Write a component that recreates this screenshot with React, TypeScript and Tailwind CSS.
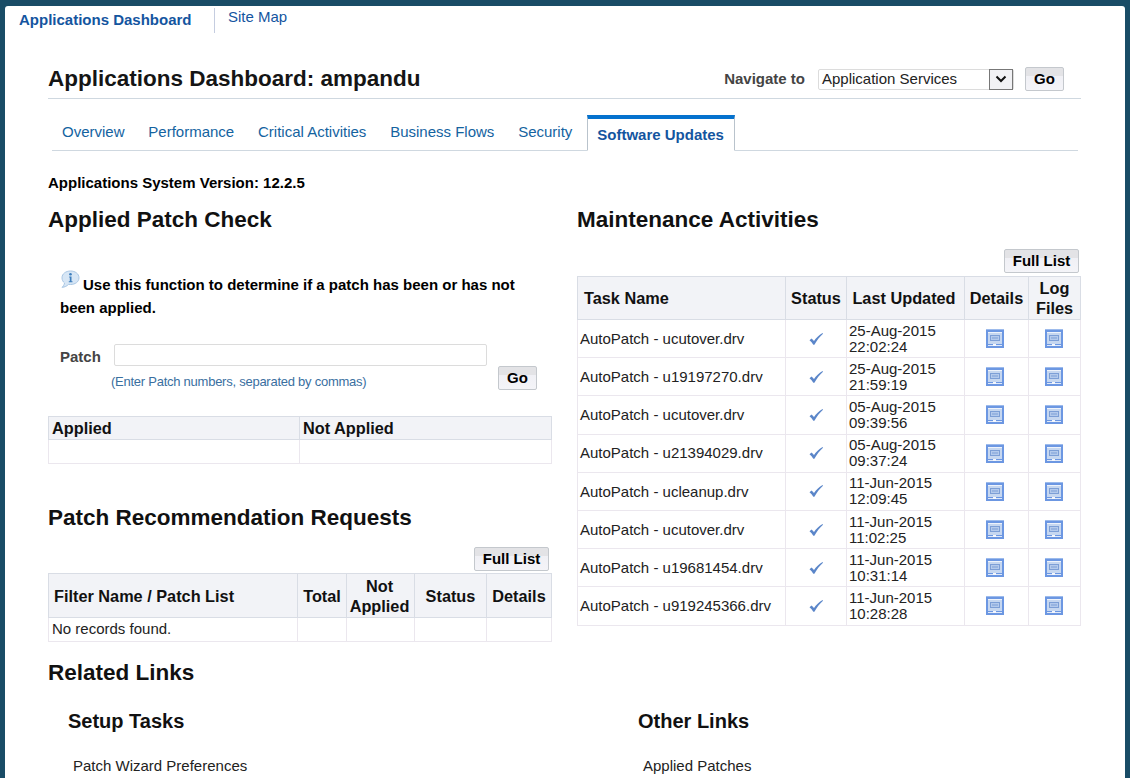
import React from "react";

const tabs = ["Overview", "Performance", "Critical Activities", "Business Flows", "Security"];
const rows = [
  ["AutoPatch - ucutover.drv", "25-Aug-2015", "22:02:24"],
  ["AutoPatch - u19197270.drv", "25-Aug-2015", "21:59:19"],
  ["AutoPatch - ucutover.drv", "05-Aug-2015", "09:39:56"],
  ["AutoPatch - u21394029.drv", "05-Aug-2015", "09:37:24"],
  ["AutoPatch - ucleanup.drv", "11-Jun-2015", "12:09:45"],
  ["AutoPatch - ucutover.drv", "11-Jun-2015", "11:02:25"],
  ["AutoPatch - u19681454.drv", "11-Jun-2015", "10:31:14"],
  ["AutoPatch - u919245366.drv", "11-Jun-2015", "10:28:28"],
];

function Check() {
  return (
    <svg width="16" height="14" viewBox="0 0 16 14" className="ml-[22px] block">
      <path d="M1.5 8.2 L3.6 6.6 L6 9 C8 6 10.800 3.200 14.500 1 L15 1.800 C11.500 5 8.800 8.500 6.400 12.800 L5.300 12.800 C4.300 11 3 9.500 1.500 8.200 Z" fill="#5b86c9" />
    </svg>
  );
}

function DocIcon({ className }: { className: string }) {
  return (
    <svg width="18" height="19" viewBox="0 0 18 19" className={`block ${className}`}>
      <rect x="0" y="0" width="18" height="19" fill="#6c97e2" />
      <rect x="0" y="0" width="18" height="1" fill="#9dbbec" />
      <rect x="2" y="3" width="14" height="12" fill="#c6d7f0" />
      <rect x="2" y="3" width="14" height="1" fill="#eef3fb" />
      <rect x="4.500" y="6.500" width="9" height="5" fill="#b4caec" stroke="#7d9fd6" strokeWidth="1" />
      <path d="M6 9h6" stroke="#7d9fd6" strokeWidth="1" />
      <rect x="2" y="16" width="14" height="1" fill="#e0e9f8" />
      <rect x="7" y="15" width="3" height="2" fill="#f4f7fd" />
    </svg>
  );
}

function InfoIcon() {
  return (
    <svg width="19" height="20" viewBox="0 0 19 20" className="block">
      <path d="M9.500 1 C14.200 1 18 3.800 18 7.800 C18 11.800 14.200 14.500 9.500 14.500 L7.500 14.400 C6 16 3.800 17.200 1 17.300 C2.500 16 3.400 14.600 3.500 13 C2 11.800 1 10 1 7.800 C1 3.800 4.800 1 9.500 1 Z" fill="#d7e6f5" stroke="#a8c6e4" />
      <circle cx="9.500" cy="4.300" r="1.300" fill="#3f7fbd" />
      <path d="M8.200 6.500h2.300v4.800h1v1H7.800v-1h1V7.500h-.6z" fill="#3f7fbd" />
    </svg>
  );
}

function Btn({ children, className }: { children: React.ReactNode; className: string }) {
  return (
    <div className={`flex items-center justify-center rounded-[2px] border border-[#c4c8cd] bg-[linear-gradient(#e3e3e6_0,#e3e3e6_35%,#f0f0f5_35%,#f4f4f8_100%)] text-[15px] font-bold text-black ${className}`}>
      {children}
    </div>
  );
}

const th = "border border-[#d9dde5] bg-[#f2f3f7] font-bold text-[#111] text-[16.300px] leading-[20px] p-0";
const td = "border border-[#ebe7ee] p-0 text-[15px] text-[#222]";
const h2 = "text-[22.500px] leading-[26px] font-bold text-[#111]";

export default function App() {
  return (
    <div className="h-[778px] overflow-hidden bg-[#194c66] px-[5px] pt-[6px] font-['Liberation_Sans',Arial,sans-serif]">
      <div className="h-[772px] overflow-hidden rounded-t-[3px] bg-white">
        <div className="flex h-[29px] items-start pl-[14px] pt-[2px]">
          <div className="w-[195px] pt-[3px] text-[15px] font-bold leading-[18px] text-[#14559f]">Applications Dashboard</div>
          <div className="h-[25px] w-px bg-[#c5cde0]" />
          <div className="pl-[13px] pt-[1px] text-[15px] leading-[16px] text-[#14559f]">Site Map</div>
        </div>

        <div className="ml-[43px] w-[1033px]">
          <div className="mt-[30px] flex h-[34px] items-center justify-between border-b border-[#cfd8e0] pb-[5px] pr-[17px]">
            <h1 className="text-[22.500px] font-bold leading-[26px] text-[#151515]">Applications Dashboard: ampandu</h1>
            <div className="flex items-center">
              <span className="mr-[13px] text-[15px] font-bold text-[#444]">Navigate to</span>
              <div className="flex h-[21px] w-[196px] items-center justify-between rounded-[2px] border border-[#dcdcdc] pl-[3px] text-[15px] text-[#222]">
                <span>Application Services</span>
                <div className="flex h-[21px] w-[24px] items-center justify-center border border-[#777] bg-[#f1f1f4]">
                  <svg width="12" height="8" viewBox="0 0 12 8"><path d="M1.500 1.500 L6 6 L10.500 1.500" fill="none" stroke="#111" strokeWidth="2" /></svg>
                </div>
              </div>
              <Btn className="ml-[11px] h-[24px] w-[39px]">Go</Btn>
            </div>
          </div>

          <div className="ml-[4px] mt-[16px] flex h-[36px] w-[1026px] items-end border-b border-[#cfd8e0]">
            <div className="flex h-[35px] items-start pl-[10px] pt-[7px] text-[15px] leading-[20px] text-[#14639f]">
              {tabs.map((t) => (
                <span key={t} className="mr-[23.800px]">{t}</span>
              ))}
            </div>
            <div className="-mb-px ml-[-9.500px] flex h-[36px] w-[148px] items-center justify-center border-x border-b border-t-[4px] border-x-[#b9c3cc] border-b-white border-t-[#0572ce] bg-white pt-[1px] text-[15px] font-bold text-[#14559f]">
              Software Updates
            </div>
          </div>

          <div className="mt-[23px] h-[18px] text-[15px] font-bold leading-[18px] text-black">Applications System Version: 12.2.5</div>

          <div className="mt-[15px] grid grid-cols-[504px_504px] gap-x-[25px]">
            <div>
              <h2 className={h2}>Applied Patch Check</h2>
              <div className="mt-[40px] h-[49px] pl-[12px] text-[15px] font-bold leading-[23px] text-black">
                <div className="relative">
                  <span className="absolute left-[1px] top-[-3px]"><InfoIcon /></span>
                  <span className="pl-[23px]">Use this function to determine if a patch has been or has not</span>
                </div>
                <div>been applied.</div>
              </div>
              <div className="mt-[22px] flex h-[69px] pl-[12px]">
                <span className="mt-[4px] w-[54px] text-[15px] font-bold leading-[18px] text-[#444]">Patch</span>
                <div>
                  <div className="h-[22px] w-[373px] rounded-[2px] border border-[#dcdcdc]" />
                  <div className="-ml-[3px] mt-[9px] text-[13px] leading-[14px] tracking-[-0.25px] text-[#3a6f9f]">(Enter Patch numbers, separated by commas)</div>
                </div>
                <Btn className="ml-[11px] mt-[22px] h-[24px] w-[39px]">Go</Btn>
              </div>

              <table className="mt-[3px] w-[504px] table-fixed border-collapse">
                <colgroup><col className="w-[251px]" /><col /></colgroup>
                <thead>
                  <tr className="h-[23px]">
                    <th className={`${th} pl-[3px] text-left`}>Applied</th>
                    <th className={`${th} pl-[3px] text-left`}>Not Applied</th>
                  </tr>
                </thead>
                <tbody>
                  <tr className="h-[24px]"><td className={td} /><td className={td} /></tr>
                </tbody>
              </table>

              <h2 className={`${h2} mt-[41px]`}>Patch Recommendation Requests</h2>
              <div className="mt-[16px] flex justify-end pr-[3px]">
                <Btn className="h-[24px] w-[75px]">Full List</Btn>
              </div>
              <table className="mt-[2px] w-[504px] table-fixed border-collapse">
                <colgroup>
                  <col className="w-[249px]" /><col className="w-[49px]" /><col className="w-[68px]" /><col className="w-[72px]" /><col />
                </colgroup>
                <thead>
                  <tr className="h-[44px]">
                    <th className={`${th} pl-[5px] text-left`}>Filter Name / Patch List</th>
                    <th className={th}>Total</th>
                    <th className={`${th} pr-[2px]`}>Not Applied</th>
                    <th className={th}>Status</th>
                    <th className={th}>Details</th>
                  </tr>
                </thead>
                <tbody>
                  <tr className="h-[24px]">
                    <td className={`${td} pl-[3px]`}>No records found.</td>
                    <td className={td} /><td className={td} /><td className={td} /><td className={td} />
                  </tr>
                </tbody>
              </table>
            </div>

            <div>
              <h2 className={h2}>Maintenance Activities</h2>
              <div className="mt-[16px] flex justify-end pr-[2px]">
                <Btn className="h-[24px] w-[75px]">Full List</Btn>
              </div>
              <table className="mt-[3px] w-[504px] table-fixed border-collapse">
                <colgroup>
                  <col className="w-[208px]" /><col className="w-[61px]" /><col className="w-[118px]" /><col className="w-[64px]" /><col />
                </colgroup>
                <thead>
                  <tr className="h-[43px]">
                    <th className={`${th} pl-[6px] text-left`}>Task Name</th>
                    <th className={th}>Status</th>
                    <th className={`${th} pr-[3px]`}>Last Updated</th>
                    <th className={th}>Details</th>
                    <th className={th}>Log Files</th>
                  </tr>
                </thead>
                <tbody>
                  {rows.map((r, i) => (
                    <tr key={i} className="h-[38.200px]">
                      <td className={`${td} pl-[2px] pt-[1px]`}>{r[0]}</td>
                      <td className={td}><Check /></td>
                      <td className={`${td} pl-[2px] leading-[16px]`}>{r[1]}<br />{r[2]}</td>
                      <td className={td}><DocIcon className="ml-[21px]" /></td>
                      <td className={td}><DocIcon className="ml-[16px]" /></td>
                    </tr>
                  ))}
                </tbody>
              </table>
            </div>
          </div>

          <h2 className={`${h2} mt-[18px]`}>Related Links</h2>
          <div className="mt-[23px] grid grid-cols-[570px_1fr] pl-[20px]">
            <div>
              <h3 className="text-[20px] font-bold leading-[24px] text-[#111]">Setup Tasks</h3>
              <div className="mt-[24px] pl-[5px] text-[15px] leading-[18px] text-[#222]">Patch Wizard Preferences</div>
            </div>
            <div>
              <h3 className="text-[20px] font-bold leading-[24px] text-[#111]">Other Links</h3>
              <div className="mt-[24px] pl-[5px] text-[15px] leading-[18px] text-[#222]">Applied Patches</div>
            </div>
          </div>
        </div>
      </div>
    </div>
  );
}
